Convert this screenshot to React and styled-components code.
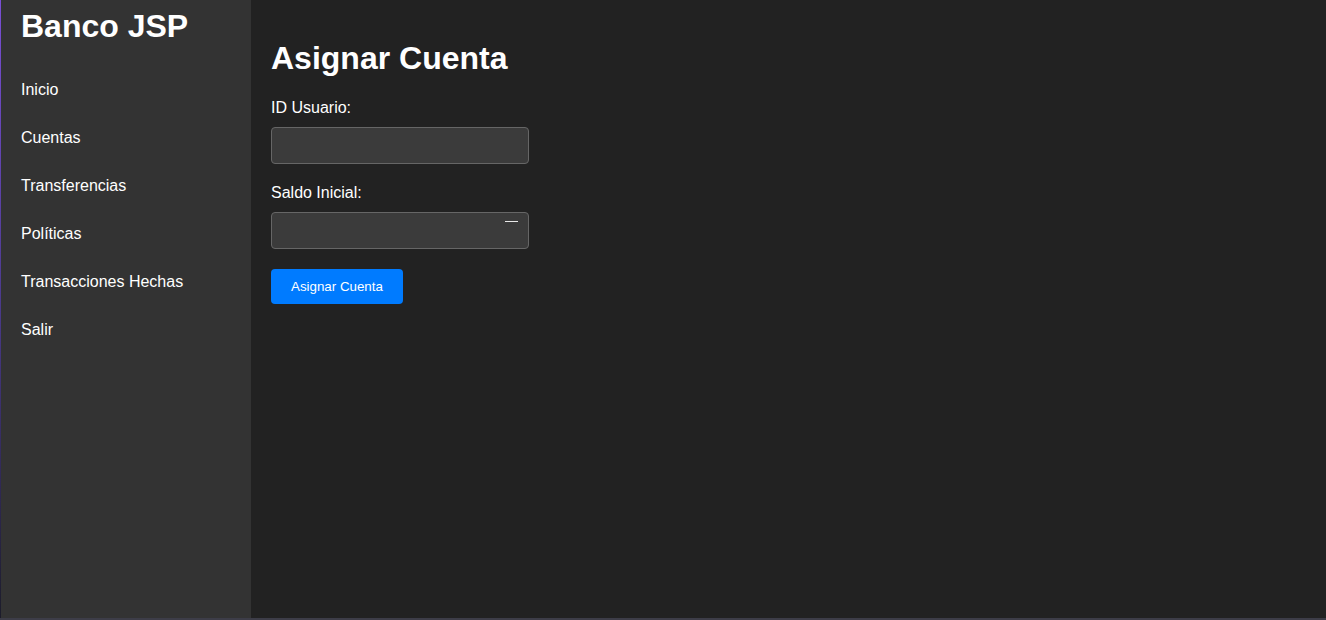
import React from "react";
import styled, { createGlobalStyle } from "styled-components";

const Global = createGlobalStyle`
  * { box-sizing: border-box; }
  html, body { margin: 0; padding: 0; background: #222; }
  body { font-family: "Liberation Sans", Arial, sans-serif; color: #fff; overflow: hidden; }
`;

const Frame = styled.div`
  display: flex;
  height: 620px;
  width: 1326px;
  border-left: 1px solid;
  border-bottom: 2px solid #3d3d48;
  border-image: linear-gradient(to bottom, #7a4fd6 0%, #4a3a8a 50%, #1c1c2a 100%) 1;
  border-top: 0;
  border-right: 0;
`;

const BottomFix = styled.div`
  position: absolute;
  left: 0;
  bottom: 0;
  width: 1326px;
  height: 2px;
  background: #3d3d48;
`;

const Sidebar = styled.nav`
  width: 250px;
  flex-shrink: 0;
  background: #333;
  padding: 8px 20px 0;
  display: flex;
  flex-direction: column;
`;

const Brand = styled.h2`
  margin: 0 0 21px;
  font-size: 32px;
  font-weight: 700;
  line-height: 37px;
`;

const NavLink = styled.a`
  display: block;
  color: #fff;
  text-decoration: none;
  font-size: 16px;
  line-height: 18px;
  padding: 15px 0;
`;

const Main = styled.main`
  flex: 1;
  background: #222;
  padding: 40px 20px 0;
`;

const Title = styled.h1`
  margin: 0 0 22px;
  font-size: 32px;
  font-weight: 700;
  line-height: 37px;
`;

const Field = styled.div`
  display: flex;
  flex-direction: column;
  margin-bottom: ${(p) => p.$mb || 17}px;
`;

const Label = styled.label`
  font-size: 16px;
  line-height: 18px;
  margin-bottom: 10px;
`;

const InputWrap = styled.div`
  position: relative;
  width: 258px;
`;

const Input = styled.input`
  width: 258px;
  height: 37px;
  background: #3b3b3b;
  border: 1px solid #666;
  border-radius: 4px;
  color: #fff;
  font-size: 16px;
  padding: 0 10px;
  outline: none;
  font-family: inherit;
  -moz-appearance: textfield;
  &::-webkit-inner-spin-button,
  &::-webkit-outer-spin-button {
    -webkit-appearance: none;
    margin: 0;
  }
`;

const Spin = styled.span`
  position: absolute;
  left: 234px;
  top: 9px;
  width: 13px;
  height: 1px;
  background: #e8e8e8;
`;

const Button = styled.button`
  align-self: flex-start;
  background: #007bff;
  color: #fff;
  border: none;
  border-radius: 4px;
  padding: 10px 20px;
  font-size: 13.33px;
  line-height: 15px;
  font-family: inherit;
  cursor: pointer;
`;

const links = ["Inicio", "Cuentas", "Transferencias", "Políticas", "Transacciones Hechas", "Salir"];

export default function App() {
  return (
    <>
      <Global />
      <Frame>
        <Sidebar>
          <Brand>Banco JSP</Brand>
          {links.map((l) => (
            <NavLink key={l} href="#">{l}</NavLink>
          ))}
        </Sidebar>
        <Main>
          <Title>Asignar Cuenta</Title>
          <Field $mb={20}>
            <Label>ID Usuario:</Label>
            <InputWrap>
              <Input type="text" />
            </InputWrap>
          </Field>
          <Field $mb={20}>
            <Label>Saldo Inicial:</Label>
            <InputWrap>
              <Input type="number" />
              <Spin />
            </InputWrap>
          </Field>
          <Button>Asignar Cuenta</Button>
        </Main>
      </Frame>
      <BottomFix />
    </>
  );
}
